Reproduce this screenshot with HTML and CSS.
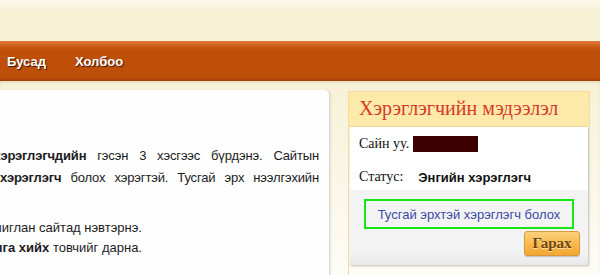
FILE: index.html
```html
<!DOCTYPE html>
<html lang="mn">
<head>
    <meta charset="UTF-8">
    <title>Хэрэглэгчийн мэдээлэл</title>
    <link rel="stylesheet" href="styles.css">
</head>
<body>
    <div class="top"></div>

    <nav class="nav">
        <a href="#">Бусад</a>
        <a href="#">Холбоо</a>
    </nav>

    <div class="main">
        <div class="article">
            <div class="row wide">
                <span>Сайт нь зочин, энгийн болон тусгай эрхтэй <b>хэрэглэгчдийн</b> гэсэн 3 хэсгээс бүрдэнэ. Сайтын</span>
            </div>
            <div class="row">
                <span>бүх боломжийг ашиглахын тулд <b>Тусгай эрхтэй хэрэглэгч</b> болох хэрэгтэй. Тусгай эрх нээлгэхийн</span>
            </div>

            <div class="steps">
                <div class="row">
                    <span>1. Өөрийн нэвтрэх нэр, нууц үгийг ашиглан сайтад нэвтэрнэ.</span>
                </div>
                <div class="row">
                    <span>2. Баруун талын <b>Тусгай эрхтэй болох хүсэлт илгээлга хийх</b> товчийг дарна.</span>
                </div>
            </div>
        </div>

        <div class="sidebar">
            <h2 class="box-title">Хэрэглэгчийн мэдээлэл</h2>
            <div class="panel">
                <div class="info">
                    <p class="hello">Сайн уу. <span class="user-name"></span></p>
                    <p class="status">Статус: <b>Энгийн хэрэглэгч</b></p>
                </div>
                <div class="actions">
                    <a class="upgrade" href="#">Тусгай эрхтэй хэрэглэгч болох</a>
                    <div class="buttons">
                        <button class="logout">Гарах</button>
                    </div>
                </div>
            </div>
        </div>
    </div>
</body>
</html>
```

FILE: styles.css
```css
body {
    margin: 0;
    overflow: hidden;
    height: 275px;
    background: #f8f3da;
    font-family: "Liberation Sans", Arial, sans-serif;
}
.top {
    height: 41px;
    background: linear-gradient(#fcf7e8, #f7f1d6 30%, #f7f2d6);
}
.nav {
    height: 40px;
    display: flex;
    align-items: center;
    gap: 29px;
    padding-left: 7px;
    background: linear-gradient(#de7a3c, #c85a14 6px, #bd4f08 9px, #bd4f08 36px, #a23f04);
}
.nav a {
    color: #fff;
    font-weight: bold;
    font-size: 13px;
    text-decoration: none;
    text-shadow: 1px 1px 1px #3a1600;
    margin-top: 1px;
}
.main {
    display: flex;
    align-items: flex-start;
    padding-top: 9px;
    height: 185px;
    background: linear-gradient(#f7f1d6, #fbf8ea 60%, #fdfcf6);
    box-shadow: inset 0 2px 2px rgba(120, 90, 30, 0.12);
}
.article {
    width: 330px;
    height: 185px;
    padding: 55px 10px 0 0;
    box-sizing: border-box;
    background: #fefefe;
    border-right: 1px solid #d8d8d6;
    border-radius: 0 5px 0 0;
    box-shadow: 1px 0 2px rgba(0, 0, 0, 0.08);
    overflow: hidden;
    font-size: 13px;
    color: #1c1c1c;
}
.row {
    display: flex;
    justify-content: flex-end;
    line-height: 22px;
    white-space: nowrap;
    letter-spacing: -0.15px;
    word-spacing: 5.6px;
}
.row.wide {
    word-spacing: 7.4px;
}
.steps {
    width: 142px;
    margin-top: 29px;
}
.steps .row {
    line-height: 20px;
    letter-spacing: 0;
    word-spacing: 0;
}
.sidebar {
    width: 242px;
    margin-left: 18px;
    margin-top: 1px;
    height: 184px;
    box-sizing: border-box;
    border-left: 1px solid #f0d8a6;
}
.box-title {
    margin: 0 0 0 -1px;
    height: 36px;
    box-sizing: border-box;
    padding: 5px 0 0 10px;
    background: #fdeaab;
    border: 1px solid #f2dc9e;
    font-family: "Liberation Serif", "Times New Roman", serif;
    font-weight: normal;
    font-size: 20px;
    color: #d53a26;
}
.panel {
    margin: 0 2px 0 1px;
    background: #fff;
    box-shadow: 1px 1px 2px rgba(0, 0, 0, 0.25);
}
.info {
    padding: 7px 0 2px 9px;
    font-family: "Liberation Serif", "Times New Roman", serif;
    font-size: 14px;
    color: #111;
}
.info p {
    margin: 0;
    display: flex;
    align-items: center;
}
.hello {
    height: 20px;
}
.user-name {
    display: inline-block;
    width: 65px;
    height: 16px;
    margin-left: 4px;
    background: #3c0000;
}
.status {
    height: 22px;
    margin-top: 12px !important;
}
.status b {
    font-family: "Liberation Sans", Arial, sans-serif;
    font-size: 13px;
    margin-left: 15px;
}
.actions {
    padding: 9px 8px 9px 14px;
    background: linear-gradient(#f3f3f3, #f3f3f3 82%, #e9e9e9);
}
.upgrade {
    display: block;
    width: 210px;
    height: 30px;
    box-sizing: border-box;
    border: 2px solid #16e616;
    text-align: center;
    line-height: 26px;
    padding-top: 1px;
    font-size: 13px;
    color: #3a4aa6;
    text-decoration: none;
}
.buttons {
    display: flex;
    justify-content: flex-end;
    margin-top: 2px;
}
.logout {
    width: 56px;
    height: 25px;
    padding: 0;
    border: 1px solid #d9983e;
    border-radius: 3px;
    background: linear-gradient(#fdd27c, #f8b74a 55%, #f3a633);
    box-shadow: 0 1px 1px rgba(0, 0, 0, 0.2);
    font-family: "Liberation Serif", "Times New Roman", serif;
    font-weight: bold;
    font-size: 15px;
    color: #6e4612;
    text-shadow: 0 1px 0 #fde6b0;
}
```
